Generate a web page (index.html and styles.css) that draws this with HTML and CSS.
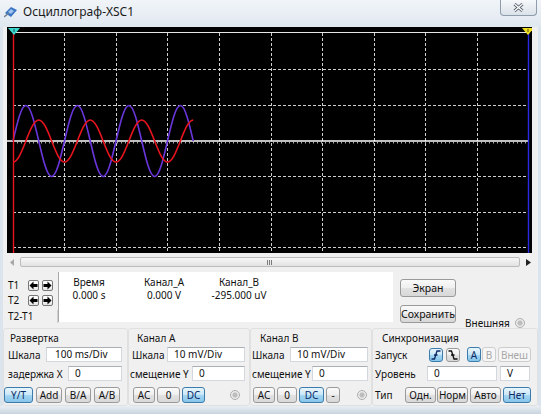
FILE: index.html
```html
<!DOCTYPE html>
<html lang="ru">
<head>
<meta charset="utf-8">
<title>Осциллограф-XSC1</title>
<link rel="stylesheet" href="styles.css">
</head>
<body>
<div class="win">
  <div class="titlebar">
    <svg class="appicon" width="14" height="12" viewBox="0 0 14 12">
      <polygon points="1,7 7,1 13,4 7,11" fill="#3a74c4"/>
      <polygon points="4,6 7,3 10,5 7,8" fill="#9cc4ee"/>
      <line x1="0" y1="11" x2="5" y2="7" stroke="#6a7f99" stroke-width="1.5"/>
    </svg>
    <span class="title">Осциллограф-XSC1</span>
    <div class="close">
      <svg width="11" height="9" viewBox="0 0 11 9">
        <path d="M1.5,1 L9.5,8 M9.5,1 L1.5,8" stroke="#56606c" stroke-width="3" fill="none"/>
        <path d="M1.5,1 L9.5,8 M9.5,1 L1.5,8" stroke="#ffffff" stroke-width="1.3" fill="none"/>
      </svg>
    </div>
  </div>
  <div class="client">
    <svg class="screen" width="525" height="226" viewBox="0 0 525 226">
      <rect x="0" y="0" width="525" height="226" fill="#000"/>
      <line x1="6" y1="5.5" x2="522" y2="5.5" stroke="#e6e6e6" stroke-width="1"/>
      <g stroke="#cfcfcf" stroke-width="1" stroke-dasharray="3 2">
        <line x1="57.5" y1="6" x2="57.5" y2="226"/>
        <line x1="109.5" y1="6" x2="109.5" y2="226"/>
        <line x1="160.5" y1="6" x2="160.5" y2="226"/>
        <line x1="212.5" y1="6" x2="212.5" y2="226"/>
        <line x1="264.5" y1="6" x2="264.5" y2="226"/>
        <line x1="315.5" y1="6" x2="315.5" y2="226"/>
        <line x1="367.5" y1="6" x2="367.5" y2="226"/>
        <line x1="418.5" y1="6" x2="418.5" y2="226"/>
        <line x1="470.5" y1="6" x2="470.5" y2="226"/>
        <line x1="6" y1="42.5" x2="522" y2="42.5"/>
        <line x1="6" y1="78.5" x2="522" y2="78.5"/>
        <line x1="6" y1="149.5" x2="522" y2="149.5"/>
        <line x1="6" y1="185.5" x2="522" y2="185.5"/>
        <line x1="6" y1="220.5" x2="522" y2="220.5"/>
      </g>
      <line x1="6" y1="115.8" x2="522" y2="115.8" stroke="#a8a8a8" stroke-width="1.6" stroke-dasharray="1 3"/>
      <line x1="0" y1="114" x2="522" y2="114" stroke="#ffffff" stroke-width="1.6"/>
      <path fill="none" stroke="#6a36dc" stroke-width="1.6" d="M6,114
        c4.199,-18.19 8.215,-35.5 12.875,-35.5 c4.66,0 8.676,17.31 12.875,35.5 c4.199,18.19 8.215,35.5 12.875,35.5 c4.66,0 8.676,-17.31 12.875,-35.5
        c4.199,-18.19 8.215,-35.5 12.875,-35.5 c4.66,0 8.676,17.31 12.875,35.5 c4.199,18.19 8.215,35.5 12.875,35.5 c4.66,0 8.676,-17.31 12.875,-35.5
        c4.199,-18.19 8.215,-35.5 12.875,-35.5 c4.66,0 8.676,17.31 12.875,35.5 c4.199,18.19 8.215,35.5 12.875,35.5 c4.66,0 8.676,-17.31 12.875,-35.5
        c4.199,-18.19 8.215,-35.5 12.875,-35.5 c4.66,0 8.676,17.31 12.875,35.5"/>
      <path fill="none" stroke="#e8141e" stroke-width="1.6" d="M6,135
        c4.66,0 8.676,-10.24 12.875,-21
        c4.199,-10.76 8.215,-21 12.875,-21 c4.66,0 8.676,10.24 12.875,21 c4.199,10.76 8.215,21 12.875,21 c4.66,0 8.676,-10.24 12.875,-21
        c4.199,-10.76 8.215,-21 12.875,-21 c4.66,0 8.676,10.24 12.875,21 c4.199,10.76 8.215,21 12.875,21 c4.66,0 8.676,-10.24 12.875,-21
        c4.199,-10.76 8.215,-21 12.875,-21 c4.66,0 8.676,10.24 12.875,21 c4.199,10.76 8.215,21 12.875,21 c4.66,0 8.676,-10.24 12.875,-21
        c4.199,-10.76 8.215,-21 12.875,-21"/>
      <line x1="6.5" y1="5" x2="6.5" y2="226" stroke="#e8141e" stroke-width="1.4"/>
      <line x1="521.5" y1="5" x2="521.5" y2="226" stroke="#2a2ae0" stroke-width="1.4"/>
      <polygon points="1,1 13,1 7,8" fill="#3cd8d0"/>
      <line x1="7" y1="2" x2="7" y2="5" stroke="#1a5050" stroke-width="1"/>
      <polygon points="515,1 527,1 521,8" fill="#f0e020"/>
      <line x1="521" y1="2" x2="521" y2="5" stroke="#5a5010" stroke-width="1"/>
    </svg>

    <div class="scroll">
      <div class="sarrow">
        <svg width="5" height="7" viewBox="0 0 5 7"><polygon points="4,0 0,3.5 4,7" fill="#a8a8a8"/></svg>
      </div>
      <div class="thumb">
        <svg width="6" height="5" viewBox="0 0 6 5"><path d="M0.5,0 V5 M2.5,0 V5 M4.5,0 V5" stroke="#7a7a7a" stroke-width="1"/></svg>
      </div>
      <div class="sarrow right">
        <svg width="5" height="7" viewBox="0 0 5 7"><polygon points="0,0 5,3.5 0,7" fill="#222"/></svg>
      </div>
    </div>

    <div class="readrow">
      <div class="cursors">
        <div class="crow">
          <span class="clbl">T1</span>
          <span class="arr"><svg width="9" height="9" viewBox="0 0 9 9"><polygon points="0.5,4.5 4.5,0.5 4.5,3 8.5,3 8.5,6 4.5,6 4.5,8.5" fill="#000"/></svg></span>
          <span class="arr"><svg width="9" height="9" viewBox="0 0 9 9"><polygon points="8.5,4.5 4.5,0.5 4.5,3 0.5,3 0.5,6 4.5,6 4.5,8.5" fill="#000"/></svg></span>
        </div>
        <div class="crow">
          <span class="clbl">T2</span>
          <span class="arr"><svg width="9" height="9" viewBox="0 0 9 9"><polygon points="0.5,4.5 4.5,0.5 4.5,3 8.5,3 8.5,6 4.5,6 4.5,8.5" fill="#000"/></svg></span>
          <span class="arr"><svg width="9" height="9" viewBox="0 0 9 9"><polygon points="8.5,4.5 4.5,0.5 4.5,3 0.5,3 0.5,6 4.5,6 4.5,8.5" fill="#000"/></svg></span>
        </div>
        <div class="dt">T2-T1</div>
      </div>
      <div class="readout">
        <span>Время</span><span>Канал_A</span><span>Канал_B</span>
        <span>0.000 s</span><span>0.000 V</span><span>-295.000 uV</span>
      </div>
      <div class="actions">
        <div class="btn big">Экран</div>
        <div class="btn big">Сохранить</div>
      </div>
      <div class="ext"><span>Внешняя</span><i class="radio"></i></div>
    </div>

    <div class="controls">
      <div class="grp g1">
        <div class="glabel">Развертка</div>
        <div class="row"><span>Шкала</span><span class="inp w76 p8">100 ms/Div</span></div>
        <div class="row"><span>задержка X</span><span class="inp w54">0</span></div>
        <div class="btnrow">
          <span class="btn sel b29">Y/T</span>
          <span class="btn b26">Add</span>
          <span class="btn b26">B/A</span>
          <span class="btn b26">A/B</span>
        </div>
      </div>
      <div class="grp g2">
        <div class="glabel">Канал A</div>
        <div class="row r1"><span>Шкала</span><span class="inp w78">10 mV/Div</span></div>
        <div class="row r2"><span>смещение Y</span><span class="inp w53">0</span></div>
        <div class="btnrow">
          <span class="btn b22">AC</span>
          <span class="btn b23">0</span>
          <span class="btn sel b23">DC</span>
          <i class="radio"></i>
        </div>
      </div>
      <div class="grp g3">
        <div class="glabel">Канал B</div>
        <div class="row"><span>Шкала</span><span class="inp w78">10 mV/Div</span></div>
        <div class="row"><span>смещение Y</span><span class="inp w56">0</span></div>
        <div class="btnrow">
          <span class="btn b22">AC</span>
          <span class="btn b20">0</span>
          <span class="btn sel b25">DC</span>
          <span class="btn b14">-</span>
          <i class="radio"></i>
        </div>
      </div>
      <div class="grp g4">
        <div class="glabel">Синхронизация</div>
        <div class="row">
          <span class="l54">Запуск</span>
          <span class="btn sel edge"><svg width="10" height="10" viewBox="0 0 10 10"><path d="M0.5,9 H3.5 L6,1 H9.5 M3,5 H6.5" stroke="#0b2a66" stroke-width="1.3" fill="none"/></svg></span>
          <span class="btn edge e2"><svg width="10" height="10" viewBox="0 0 10 10"><path d="M0.5,1 H3.5 L6,9 H9.5 M3,5 H6.5" stroke="#111" stroke-width="1.3" fill="none"/></svg></span>
          <span class="btn sel ta">A</span>
          <span class="btn dis tb">B</span>
          <span class="btn dis tc">Внеш</span>
        </div>
        <div class="row">
          <span class="l52">Уровень</span>
          <span class="inp w70">0</span>
          <span class="inp w30">V</span>
        </div>
        <div class="btnrow">
          <span class="l30">Тип</span>
          <span class="btn b31">Одн.</span>
          <span class="btn b31 m1">Норм</span>
          <span class="btn b31 m2">Авто</span>
          <span class="btn sel b28 m2">Нет</span>
        </div>
      </div>
    </div>
  </div>
  <div class="bottom"></div>
</div>
</body>
</html>
```

FILE: styles.css
```css
* { box-sizing: border-box; }
html, body { margin: 0; padding: 0; }
body {
  width: 541px;
  height: 414px;
  overflow: hidden;
  background: #dbe4ed;
  font-family: "Noto Sans", "DejaVu Sans", sans-serif;
  font-size: 10px;
  color: #111;
}
.win { display: flex; flex-direction: column; height: 414px; }

.titlebar {
  height: 27px;
  flex: none;
  display: flex;
  align-items: flex-start;
  background: linear-gradient(#f1f5f9, #dfe7ef);
}
.appicon { margin: 6px 0 0 4px; flex: none; }
.title { margin: 3px 0 0 5px; font-size: 12px; line-height: 18px; color: #1b1b1b; }
.close {
  margin-left: auto;
  margin-right: 4px;
  width: 37px;
  height: 16px;
  border: 1px solid #8f9cab;
  border-top: none;
  border-radius: 0 0 4px 4px;
  background: linear-gradient(#f6f8fa, #dbe2ea);
  display: flex;
  align-items: center;
  justify-content: center;
}

.client {
  flex: 1;
  margin: 0 3px;
  background: #f0f0f0;
  display: flex;
  flex-direction: column;
}
.screen { display: block; margin-left: 4px; flex: none; }

.scroll {
  margin: 4px 1px 0 2px;
  height: 10px;
  display: flex;
  align-items: center;
}
.sarrow { width: 15px; height: 10px; display: flex; align-items: center; justify-content: center; }
.sarrow.right { width: 17px; }
.thumb {
  flex: 1;
  height: 10px;
  border: 1px solid #bcbcbc;
  border-radius: 2px;
  background: linear-gradient(#f7f7f7, #e2e2e2);
  display: flex;
  align-items: center;
  justify-content: center;
}

.readrow { margin-top: 3px; height: 54px; display: flex; flex: none; }
.cursors { width: 55px; padding-top: 9px; }
.crow { height: 12px; display: flex; align-items: center; margin-bottom: 3px; }
.clbl { width: 25px; padding-left: 5px; line-height: 12px; }
.arr {
  width: 11px;
  height: 11px;
  margin-right: 3px;
  border: 1px solid #777;
  border-radius: 2px;
  background: linear-gradient(#ffffff, #e6e6e6);
  display: flex;
  align-items: center;
  justify-content: center;
}
.dt {
  margin-top: 4px;
  height: 13px;
  line-height: 13px;
  padding-left: 5px;
  border-right: 1px solid #cfcfcf;
}
.readout {
  margin-top: 2px;
  width: 335px;
  height: 50px;
  background: #fff;
  border-left: 1px solid #a8a8a8;
  display: grid;
  grid-template-columns: 60px 90px 60px;
  grid-auto-rows: 13px;
  align-content: start;
  padding-top: 4px;
  line-height: 13px;
}
.readout span { text-align: center; white-space: nowrap; }
.actions {
  margin-left: 7px;
  width: 56px;
  padding-top: 9px;
  display: flex;
  flex-direction: column;
  gap: 8px;
}
.ext {
  margin-left: 9px;
  align-self: flex-end;
  margin-bottom: -5px;
  display: flex;
  align-items: center;
  gap: 5px;
  line-height: 12px;
}

.btn {
  display: flex;
  align-items: center;
  justify-content: center;
  height: 16px;
  border: 1px solid #9a9a9a;
  border-radius: 3px;
  background: linear-gradient(#fafafa, #efefef 50%, #e2e2e2 50%, #d8d8d8);
  white-space: nowrap;
  line-height: 12px;
  flex: none;
}
.btn.big { height: 18px; width: 56px; font-size: 10.5px; }
.btn.sel {
  background: linear-gradient(#e9f6fd, #c8e6f7 50%, #a7d7f2 50%, #86c5ea);
  border-color: #3c7cac;
  color: #0b2a66;
}
.btn.dis { color: #a8a8a8; border-color: #cdcdcd; background: #f6f6f6; }

.radio {
  display: block;
  width: 10px;
  height: 10px;
  border-radius: 50%;
  border: 1px solid #adadad;
  background: radial-gradient(circle, #bdbdbd 0 2px, #e6e6e6 3px, #f8f8f8 5px);
  flex: none;
}

.controls { margin-top: 4px; height: 78px; display: flex; flex: none; }
.grp {
  border: 1px solid #e0e0e0;
  border-radius: 3px;
  height: 78px;
}
.g1 { width: 125px; padding: 0 5px 0 4px; }
.g2 { width: 122px; padding: 0 4px 0 3px; }
.g3 { width: 122px; padding: 0 3px 0 1px; }
.g4 { width: 166px; padding: 0 6px 0 2px; }
.glabel { margin-top: 2px; height: 14px; line-height: 14px; padding-left: 2px; }
.g2 .glabel { padding-left: 5px; }
.g3 .glabel { padding-left: 8px; }
.g4 .glabel { padding-left: 7px; }
.row { height: 19px; display: flex; align-items: center; white-space: nowrap; }
.row .inp { margin-left: auto; }
.g2 .r2 { margin-left: -2px; }
.g4 .row .inp { margin-left: 0; }
.btnrow { margin-top: 3px; height: 17px; display: flex; align-items: center; gap: 3px; }
.g1 .btnrow { margin-left: -4px; padding-left: 0; }
.g2 .btnrow, .g3 .btnrow { padding-left: 1px; gap: 2px; }
.g2 .btnrow .radio { margin-left: auto; margin-right: 5px; }
.g3 .btnrow .radio { margin-left: auto; margin-right: 1px; }
.g4 .btnrow { gap: 0; }

.inp {
  display: block;
  height: 15px;
  border: 1px solid #d3d8de;
  border-top-color: #a9afb6;
  background: #fff;
  padding-left: 6px;
  line-height: 13px;
}
.inp.p8 { padding-left: 8px; }
.w76 { width: 76px; }
.w54 { width: 54px; }
.w78 { width: 78px; }
.w53 { width: 53px; }
.w56 { width: 56px; }
.w70 { width: 70px; }
.w30 { width: 30px; margin-left: 3px !important; }

.b29 { width: 29px; }
.b26 { width: 26px; }
.b22 { width: 22px; }
.b23 { width: 23px; }
.b20 { width: 20px; }
.b25 { width: 25px; }
.b14 { width: 14px; }
.b31 { width: 31px; }
.b28 { width: 28px; }
.m1 { margin-left: 1px; }
.m2 { margin-left: 2px; }

.l54 { width: 54px; }
.l52 { width: 52px; }
.l30 { width: 30px; }
.edge { width: 14px; height: 14px; }
.e2 { margin-left: 3px; }
.ta { width: 14px; height: 15px; margin-left: 7px; }
.tb { width: 14px; height: 15px; margin-left: 1px; }
.tc { width: 33px; height: 15px; margin-left: 2px; }

.bottom { height: 8px; flex: none; background: linear-gradient(#e9eef3, #c9d4df); }
```
